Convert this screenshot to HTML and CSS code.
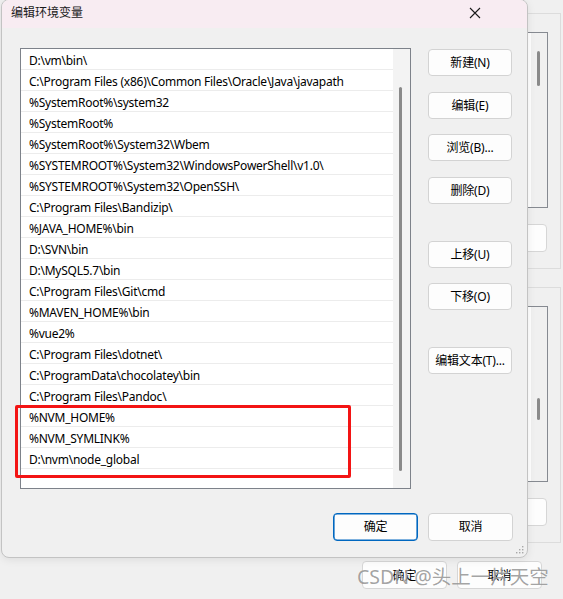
FILE: index.html
```html
<!DOCTYPE html>
<html lang="zh-CN">
<head>
<meta charset="utf-8">
<title>编辑环境变量</title>
<link rel="stylesheet" href="styles.css">
</head>
<body>
<div class="desktop">
  <div class="bgwin">
    <div class="group g1">
      <div class="bglist"><div class="bgtrack"><div class="bgthumb t1"></div></div></div>
      <div class="bgbtn"></div>
    </div>
    <div class="group g2">
      <div class="bglist"><div class="bgtrack"><div class="bgthumb t2"></div></div></div>
      <div class="bgbtn"></div>
    </div>
    <div class="bgfooter">
      <div class="bgbtn2">确定</div>
      <div class="bgbtn2">取消</div>
    </div>
  </div>

  <div class="dialog">
    <div class="titlebar">
      <span class="title">编辑环境变量</span>
      <svg class="close" width="12" height="12" viewBox="0 0 12 12"><path d="M1 1 L11 11 M11 1 L1 11" stroke="#1a1a1a" stroke-width="1.1" fill="none"/></svg>
    </div>
    <div class="body">
      <div class="main">
        <div class="listbox">
          <div class="rows">
            <div class="row">D:\vm\bin\</div>
            <div class="row">C:\Program Files (x86)\Common Files\Oracle\Java\javapath</div>
            <div class="row">%SystemRoot%\system32</div>
            <div class="row">%SystemRoot%</div>
            <div class="row">%SystemRoot%\System32\Wbem</div>
            <div class="row">%SYSTEMROOT%\System32\WindowsPowerShell\v1.0\</div>
            <div class="row">%SYSTEMROOT%\System32\OpenSSH\</div>
            <div class="row">C:\Program Files\Bandizip\</div>
            <div class="row">%JAVA_HOME%\bin</div>
            <div class="row">D:\SVN\bin</div>
            <div class="row">D:\MySQL5.7\bin</div>
            <div class="row">C:\Program Files\Git\cmd</div>
            <div class="row">%MAVEN_HOME%\bin</div>
            <div class="row">%vue2%</div>
            <div class="row">C:\Program Files\dotnet\</div>
            <div class="row">C:\ProgramData\chocolatey\bin</div>
            <div class="row">C:\Program Files\Pandoc\</div>
            <div class="row">%NVM_HOME%</div>
            <div class="row">%NVM_SYMLINK%</div>
            <div class="row">D:\nvm\node_global</div>
          </div>
          <div class="track"><div class="thumb"></div></div>
        </div>
        <div class="side">
          <button class="btn">新建(N)</button>
          <button class="btn mt1">编辑(E)</button>
          <button class="btn">浏览(B)...</button>
          <button class="btn mt1">删除(D)</button>
          <button class="btn mtl">上移(U)</button>
          <button class="btn">下移(O)</button>
          <button class="btn mtl">编辑文本(T)...</button>
        </div>
      </div>
      <div class="footer">
        <button class="btn wide primary">确定</button>
        <button class="btn wide">取消</button>
      </div>
    </div>
    <svg class="grip" width="8" height="8" viewBox="0 0 8 8">
      <rect x="6" y="0" width="1.4" height="1.4" fill="#a8a8a8"/>
      <rect x="3" y="3" width="1.4" height="1.4" fill="#a8a8a8"/>
      <rect x="6" y="3" width="1.4" height="1.4" fill="#a8a8a8"/>
      <rect x="0" y="6" width="1.4" height="1.4" fill="#a8a8a8"/>
      <rect x="3" y="6" width="1.4" height="1.4" fill="#a8a8a8"/>
      <rect x="6" y="6" width="1.4" height="1.4" fill="#a8a8a8"/>
    </svg>
  </div>

  <div class="highlight"></div>
  <div class="watermark">CSDN @头上一片天空</div>
</div>
</body>
</html>
```

FILE: styles.css
```css
* { box-sizing: border-box; }

html, body {
  margin: 0;
  padding: 0;
  background: #f0f0f0;
}

body {
  font-family: "Noto Sans", "Noto Sans CJK SC", sans-serif;
  font-size: 12px;
  color: #000;
}

.desktop {
  position: relative;
  width: 563px;
  height: 599px;
  overflow: hidden;
  background: #f0f0f0;
}

/* ---------- background window (partly hidden) ---------- */
.bgwin {
  position: absolute;
  left: 300px;
  top: 0;
  width: 261px;
  height: 599px;
  display: flex;
  flex-direction: column;
}

.group {
  border: 1px solid #dcdcdc;
  height: 256px;
  display: flex;
  flex-direction: column;
  align-items: flex-end;
  padding: 18px 12px 0 0;
}

.g1 { margin-top: 13px; }
.g2 { margin-top: 18px; }

.bglist {
  width: 200px;
  height: 176px;
  border: 1px solid #868a91;
  background: #fff;
  display: flex;
  justify-content: flex-end;
}

.bgtrack {
  width: 16px;
  height: 100%;
  background: #f0f0f0;
  position: relative;
}

.bgthumb {
  position: absolute;
  left: 6px;
  width: 3px;
  border-radius: 2px;
  background: #8a8a8a;
}
.t1 { top: 18px; height: 35px; }
.t2 { top: 91px; height: 22px; }

.bgbtn {
  margin-top: 16px;
  margin-right: 1px;
  width: 85px;
  height: 28px;
  background: #fdfdfd;
  border: 1px solid #d6d6d6;
  border-radius: 4px;
}

.bgfooter {
  margin-top: 18px;
  display: flex;
  gap: 10px;
  padding-left: 62px;
}

.bgbtn2 {
  width: 85px;
  height: 28px;
  background: #fdfdfd;
  border: 1px solid #d6d6d6;
  border-radius: 4px;
  display: flex;
  align-items: center;
  justify-content: center;
}

/* ---------- dialog ---------- */
.dialog {
  position: absolute;
  left: 1px;
  top: -1px;
  width: 527px;
  height: 559px;
  background: #f0f0f0;
  border: 1px solid #c3c3c3;
  border-radius: 8px;
  overflow: hidden;
  box-shadow: 0 2px 8px rgba(0, 0, 0, 0.08);
}

.titlebar {
  height: 28px;
  background: #f8ecf2;
  display: flex;
  align-items: center;
  justify-content: space-between;
  padding: 0 46px 2px 9px;
}

.title {
  font-size: 12px;
  line-height: 1;
  color: #1a1a1a;
}

.close {
  display: block;
}

.body {
  padding: 20px 14px 0 18px;
}

.main {
  display: grid;
  grid-template-columns: 391px 84px;
  column-gap: 17px;
  align-items: start;
}

.listbox {
  height: 441px;
  border: 1px solid #7d828a;
  background: #fff;
  display: flex;
}

.rows {
  flex: 1;
}

.row {
  height: 21px;
  padding-top: 2px;
  line-height: 20px;
  letter-spacing: -0.25px;
  border-bottom: 1px solid #ececec;
  padding-left: 8px;
  white-space: nowrap;
  overflow: hidden;
}

.track {
  width: 17px;
  background: #f3f3f3;
  position: relative;
}

.thumb {
  position: absolute;
  left: 6px;
  top: 38px;
  width: 3px;
  height: 384px;
  border-radius: 2px;
  background: #8a8a8a;
}

.side {
  display: flex;
  flex-direction: column;
  gap: 15px;
  padding-top: 1px;
}

.btn {
  font-family: "Noto Sans", "Noto Sans CJK SC", sans-serif;
  font-size: 12px;
  letter-spacing: -0.2px;
  color: #000;
  height: 27px;
  padding: 0;
  background: #fdfdfd;
  border: 1px solid #d3d3d3;
  border-radius: 4px;
  line-height: 1;
}

.mt1 { margin-top: 1px; }
.mtl { margin-top: 22px; }

.footer {
  display: flex;
  justify-content: flex-end;
  gap: 10px;
  margin-top: 24px;
}

.wide {
  width: 85px;
  height: 28px;
}

.primary {
  border: 1px solid #0067c0;
  box-shadow: inset 0 0 0 0.6px #0067c0;
}

.grip {
  position: absolute;
  right: 3px;
  bottom: 3px;
}

/* ---------- annotation overlay ---------- */
.highlight {
  position: absolute;
  left: 15px;
  top: 405px;
  width: 336px;
  height: 73px;
  border: 3px solid #f31414;
  border-radius: 2px;
}

.watermark {
  position: absolute;
  left: 357px;
  top: 565px;
  font-size: 19.5px;
  line-height: 24px;
  color: rgba(110, 110, 110, 0.65);
  white-space: nowrap;
  text-shadow: 0 0 1px rgba(255, 255, 255, 0.8);
}
```
